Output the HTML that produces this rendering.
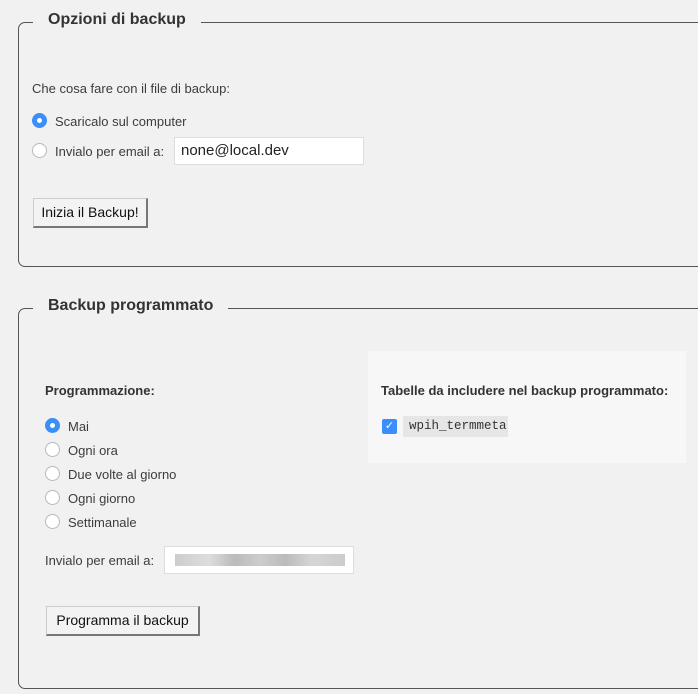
<!DOCTYPE html>
<html><head><meta charset="utf-8"><style>
*{box-sizing:border-box}
body{margin:0;width:698px;height:694px;background:#f1f1f1;font-family:"Liberation Sans",sans-serif;color:#3c3c3c;font-size:13px;position:relative;overflow:hidden}
.a{position:absolute;white-space:nowrap}
.fs{position:absolute;left:18px;width:720px;border:1px solid #555;border-radius:7px}
.lg{position:absolute;background:#f1f1f1;font-weight:bold;font-size:16px;color:#333;padding:0 15px;line-height:20px}
.r{position:absolute;width:15px;height:15px;border-radius:50%;border:1px solid #b4b9be;background:#fff}
.r.on{background:#3a8ffa;border-color:#3a8ffa}
.r.on::after{content:"";position:absolute;left:4px;top:4px;width:5px;height:5px;border-radius:50%;background:#fff}
.inp{position:absolute;background:#fff;border:1px solid #ddd}
.btn{position:absolute;background:#f3f3f3;border:1px solid #ccc;border-right:2px solid #777;border-bottom:2px solid #777;color:#111;font-size:14px;text-align:center}
</style></head><body>
<div class="fs" style="top:22px;height:245px"></div>
<div class="lg" style="left:33px;top:10px">Opzioni di backup</div>
<div class="a" style="left:32px;top:81px">Che cosa fare con il file di backup:</div>
<div class="r on" style="left:32px;top:113px"></div>
<div class="a" style="left:55px;top:114px">Scaricalo sul computer</div>
<div class="r" style="left:32px;top:143px"></div>
<div class="a" style="left:55px;top:144px">Invialo per email a:</div>
<div class="inp" style="left:174px;top:137px;width:190px;height:28px"><span class="a" style="left:6px;top:4px;font-size:15px;color:#222">none@local.dev</span></div>
<div class="btn" style="left:33px;top:198px;width:115px;height:30px;line-height:27px">Inizia il Backup!</div>

<div class="fs" style="top:308px;height:381px"></div>
<div class="lg" style="left:33px;top:296px">Backup programmato</div>
<div class="a" style="left:368px;top:351px;width:318px;height:112px;background:#f7f7f7"></div>
<div class="a" style="left:45px;top:383px;font-weight:bold;color:#333">Programmazione:</div>
<div class="a" style="left:381px;top:383px;font-weight:bold;color:#333">Tabelle da includere nel backup programmato:</div>
<div class="a" style="left:382px;top:419px;width:15px;height:15px;background:#3a8ffa;border-radius:2px;color:#fff;font-size:11px;line-height:15px;text-align:center">✓</div>
<div class="a" style="left:403px;top:416px;width:105px;height:21px;background:#e6e6e6;font-family:'Liberation Mono',monospace;font-size:12.5px;line-height:21px;padding-left:6px;color:#333">wpih_termmeta</div>
<div class="r on" style="left:45px;top:418px"></div><div class="a" style="left:68px;top:419px">Mai</div>
<div class="r" style="left:45px;top:442px"></div><div class="a" style="left:68px;top:443px">Ogni ora</div>
<div class="r" style="left:45px;top:466px"></div><div class="a" style="left:68px;top:467px">Due volte al giorno</div>
<div class="r" style="left:45px;top:490px"></div><div class="a" style="left:68px;top:491px">Ogni giorno</div>
<div class="r" style="left:45px;top:514px"></div><div class="a" style="left:68px;top:515px">Settimanale</div>
<div class="a" style="left:45px;top:553px">Invialo per email a:</div>
<div class="inp" style="left:164px;top:546px;width:190px;height:28px">
<div class="a" style="left:10px;top:7px;width:170px;height:12px;background:linear-gradient(90deg,#ccc,#ddd 20%,#bbb 35%,#ccc 50%,#bbb 65%,#d5d5d5 80%,#ccc)"></div></div>
<div class="btn" style="left:46px;top:606px;width:154px;height:30px;line-height:27px">Programma il backup</div>
</body></html>
